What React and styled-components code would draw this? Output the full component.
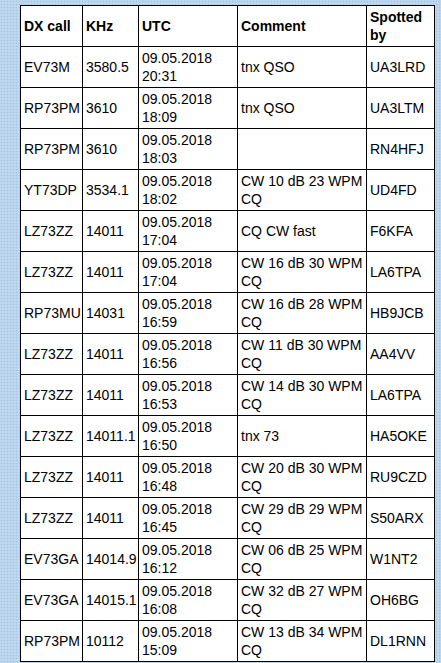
import styled, { createGlobalStyle } from "styled-components";

const GlobalStyle = createGlobalStyle`
    html, body {
        margin: 0;
        padding: 0;
    }
    body {
        background-color: #b9d3ec;
        background-image:
            radial-gradient(#a6c4e4 0.8px, transparent 0.9px),
            radial-gradient(#cfe2f6 0.8px, transparent 0.9px);
        background-size: 3px 3px, 3px 3px;
        background-position: 0 0, 1.5px 1.5px;
        font-family: 'Liberation Sans', Arial, sans-serif;
    }
`

const spots = [
    ['EV73M', '3580.5', '09.05.2018 20:31', 'tnx QSO', 'UA3LRD'],
    ['RP73PM', '3610', '09.05.2018 18:09', 'tnx QSO', 'UA3LTM'],
    ['RP73PM', '3610', '09.05.2018 18:03', '', 'RN4HFJ'],
    ['YT73DP', '3534.1', '09.05.2018 18:02', 'CW 10 dB 23 WPM CQ', 'UD4FD'],
    ['LZ73ZZ', '14011', '09.05.2018 17:04', 'CQ CW fast', 'F6KFA'],
    ['LZ73ZZ', '14011', '09.05.2018 17:04', 'CW 16 dB 30 WPM CQ', 'LA6TPA'],
    ['RP73MU', '14031', '09.05.2018 16:59', 'CW 16 dB 28 WPM CQ', 'HB9JCB'],
    ['LZ73ZZ', '14011', '09.05.2018 16:56', 'CW 11 dB 30 WPM CQ', 'AA4VV'],
    ['LZ73ZZ', '14011', '09.05.2018 16:53', 'CW 14 dB 30 WPM CQ', 'LA6TPA'],
    ['LZ73ZZ', '14011.1', '09.05.2018 16:50', 'tnx 73', 'HA5OKE'],
    ['LZ73ZZ', '14011', '09.05.2018 16:48', 'CW 20 dB 30 WPM CQ', 'RU9CZD'],
    ['LZ73ZZ', '14011', '09.05.2018 16:45', 'CW 29 dB 29 WPM CQ', 'S50ARX'],
    ['EV73GA', '14014.9', '09.05.2018 16:12', 'CW 06 dB 25 WPM CQ', 'W1NT2'],
    ['EV73GA', '14015.1', '09.05.2018 16:08', 'CW 32 dB 27 WPM CQ', 'OH6BG'],
    ['RP73PM', '10112', '09.05.2018 15:09', 'CW 13 dB 34 WPM CQ', 'DL1RNN'],
]

const widths = [62, 56, 99, 129, 68]

function App(){
    return (
        <>
            <GlobalStyle />
            <Page>
                <SpotTable>
                    <colgroup>
                        {widths.map((w, i) => <col key={i} style={{width: w}} />)}
                    </colgroup>
                    <thead>
                        <tr>
                            <Head>DX call</Head>
                            <Head>KHz</Head>
                            <Head>UTC</Head>
                            <Head>Comment</Head>
                            <Head>Spotted by</Head>
                        </tr>
                    </thead>
                    <tbody>
                        {spots.map((s, i) => (
                            <tr key={i}>
                                <Cell>{s[0]}</Cell>
                                <Cell>{s[1]}</Cell>
                                <Cell>{s[2]}</Cell>
                                <Cell>{s[3]}</Cell>
                                <Cell>{s[4]}</Cell>
                            </tr>
                        ))}
                    </tbody>
                </SpotTable>
            </Page>
        </>
    )
}

export default App;



const Page = styled.div`
    padding: 5px 0 0 20px;
    width: 441px;
    height: 663px;
    box-sizing: border-box;
    overflow: hidden;
`
const SpotTable = styled.table`
    border-collapse: collapse;
    table-layout: fixed;
    width: 415px;
    background: #ffffff;
    border: 1px solid #000;
`
const Head = styled.th`
    border: 1px solid #000;
    height: 40px;
    box-sizing: border-box;
    padding: 2px 3px;
    text-align: left;
    vertical-align: middle;
    font-size: 14px;
    font-weight: bold;
    line-height: 18px;
    color: #000;
`
const Cell = styled.td`
    border: 1px solid #000;
    height: 40px;
    box-sizing: border-box;
    padding: 2px 3px;
    vertical-align: middle;
    font-size: 14px;
    line-height: 18px;
    color: #000;
`
